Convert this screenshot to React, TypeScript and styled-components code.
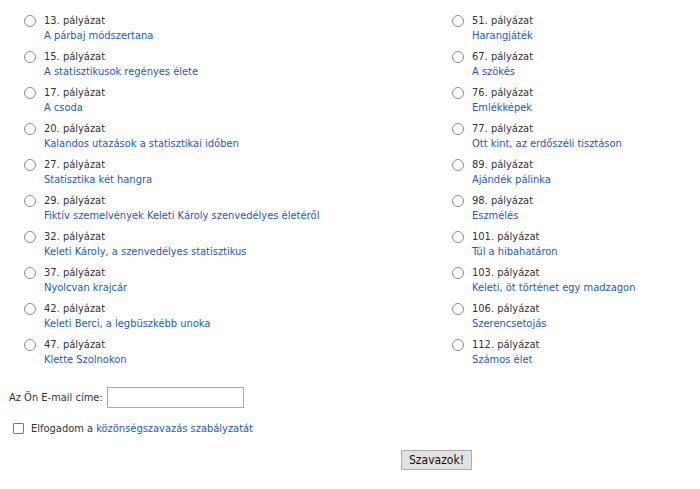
import React from "react";
import styled, { createGlobalStyle } from "styled-components";

const Global = createGlobalStyle`
  html, body { margin: 0; padding: 0; background: #fff; }
  body { font-family: Tahoma, "DejaVu Sans Condensed", "DejaVu Sans", sans-serif; font-size: 11px; color: #333; }
`;

const Page = styled.form`
  width: 700px;
  padding: 13px 0 0 0;
  box-sizing: border-box;
`;

const Grid = styled.div`
  display: grid;
  grid-template-columns: 428px 1fr;
  grid-auto-flow: column;
  grid-template-rows: repeat(10, 30px);
  row-gap: 6px;
  padding-left: 24px;
`;

const Item = styled.label`
  display: flex;
  align-items: flex-start;
  gap: 8px;
  line-height: 15px;
  cursor: pointer;
`;

const Radio = styled.span`
  flex: none;
  width: 12px;
  height: 12px;
  margin-top: 2px;
  border: 1.5px solid #8a8a8a;
  border-radius: 50%;
  box-sizing: border-box;
  background: #fff;
`;

const Texts = styled.span`
  display: flex;
  flex-direction: column;
`;

const Num = styled.span`
  color: #333;
`;

const Link = styled.a`
  color: #2458c6;
  text-decoration: none;
`;

const EmailRow = styled.div`
  display: flex;
  align-items: center;
  gap: 4px;
  margin-top: 20px;
  padding-left: 9px;
`;

const Input = styled.input`
  width: 137px;
  height: 21px;
  box-sizing: border-box;
  border: 1px solid #a9a9a9;
  padding: 1px 3px;
  margin: 0;
  font: inherit;
`;

const AcceptRow = styled.div`
  display: flex;
  align-items: center;
  gap: 7px;
  margin-top: 14px;
  padding-left: 13px;
`;

const Box = styled.span`
  width: 11px;
  height: 11px;
  border: 1px solid #7a7a7a;
  border-radius: 1px;
  box-sizing: border-box;
`;

const ButtonRow = styled.div`
  display: flex;
  padding-left: 401px;
  margin-top: 15px;
`;

const Button = styled.button`
  width: 71px;
  height: 20px;
  padding: 0;
  background: #e1e1e1;
  border: 1px solid #adadad;
  font-family: Tahoma, "DejaVu Sans Condensed", "DejaVu Sans", sans-serif;
  font-size: 12px;
  color: #111;
`;

const left: [string, string][] = [
  ["13", "A párbaj módszertana"],
  ["15", "A statisztikusok regényes élete"],
  ["17", "A csoda"],
  ["20", "Kalandos utazások a statisztikai időben"],
  ["27", "Statisztika két hangra"],
  ["29", "Fiktív szemelvények Keleti Károly szenvedélyes életéről"],
  ["32", "Keleti Károly, a szenvedélyes statisztikus"],
  ["37", "Nyolcvan krajcár"],
  ["42", "Keleti Berci, a legbüszkébb unoka"],
  ["47", "Klette Szolnokon"],
];

const right: [string, string][] = [
  ["51", "Harangjáték"],
  ["67", "A szökés"],
  ["76", "Emlékképek"],
  ["77", "Ott kint, az erdőszéli tisztáson"],
  ["89", "Ajándék pálinka"],
  ["98", "Eszmélés"],
  ["101", "Túl a hibahatáron"],
  ["103", "Keleti, öt történet egy madzagon"],
  ["106", "Szerencsetojás"],
  ["112", "Számos élet"],
];

export default function App() {
  return (
    <>
      <Global />
      <Page onSubmit={(e) => e.preventDefault()}>
        <Grid>
          {[...left, ...right].map(([n, t]) => (
            <Item key={n}>
              <Radio />
              <Texts>
                <Num>{n}. pályázat</Num>
                <Link href="#">{t}</Link>
              </Texts>
            </Item>
          ))}
        </Grid>
        <EmailRow>
          <span>Az Ön E-mail címe:</span>
          <Input type="text" />
        </EmailRow>
        <AcceptRow>
          <Box />
          <span>
            Elfogadom a <Link href="#">közönségszavazás szabályzatát</Link>
          </span>
        </AcceptRow>
        <ButtonRow>
          <Button type="submit">Szavazok!</Button>
        </ButtonRow>
      </Page>
    </>
  );
}
